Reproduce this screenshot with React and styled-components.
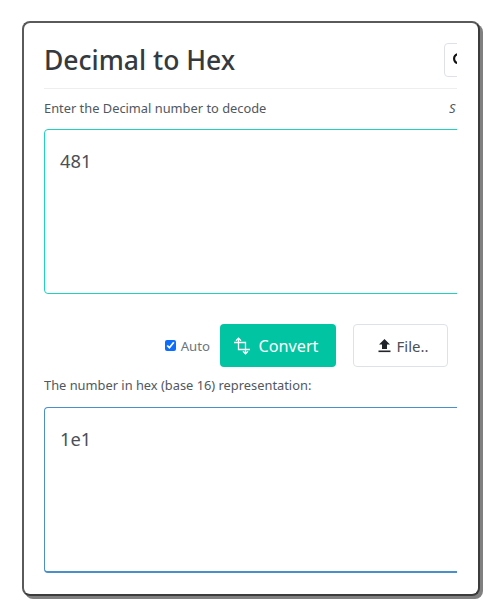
import React from "react";
import styled, { createGlobalStyle } from "styled-components";
import { FaSearch } from "react-icons/fa";

const Global = createGlobalStyle`
  html, body { margin: 0; padding: 0; background: #fff; }
  body { width: 500px; height: 616px; overflow: hidden; font-family: "Noto Sans", "Open Sans", sans-serif; color: #343a40; }
`;
const Page = styled.div`
  padding: 21px 0 0 22px;
`;
const Card = styled.section`
  box-sizing: border-box;
  width: 458px;
  height: 575px;
  border: 2px solid #5a5a5a;
  border-right-color: #3c3c3c;
  border-bottom-color: #3c3c3c;
  border-radius: 8px;
  background: #fff;
  box-shadow: 3px 3px 0 0 #808080;
  padding: 0 21px 0 20px;
`;
const Clip = styled.div`
  width: 413px;
  height: 100%;
  overflow: hidden;
`;
const Inner = styled.div`
  width: 640px;
`;
const Header = styled.header`
  display: flex;
  align-items: flex-start;
  justify-content: space-between;
  box-sizing: border-box;
  width: 413px;
  height: 66px;
  padding-top: 19px;
  border-bottom: 1px solid #eeeeee;
`;
const Title = styled.h1`
  margin: 0;
  font-size: 26.5px;
  line-height: 36px;
  font-weight: 500;
  color: #343a40;
`;
const SearchBox = styled.div`
  box-sizing: border-box;
  width: 40px;
  height: 34px;
  margin: 1px -27px 0 0;
  border: 1px solid #dee2e6;
  border-radius: 4px;
  display: flex;
  align-items: center;
  padding-left: 8px;
  color: #111;
`;
const LabelRow = styled.div`
  display: flex;
  justify-content: space-between;
  align-items: center;
  box-sizing: border-box;
  width: 413px;
  height: 40px;
  padding-bottom: 2px;
  font-size: 12.85px;
  color: #505860;
`;
const Side = styled.span`
  font-style: italic;
  width: 8px;
  overflow: hidden;
`;
const Area = styled.textarea`
  display: block;
  box-sizing: border-box;
  width: 640px;
  height: ${(p) => p.$height}px;
  border: 1px solid ${(p) => p.$accent};
  border-bottom-width: ${(p) => p.$bottom}px;
  border-radius: 4px;
  padding: 17px 15px;
  font-family: "Noto Sans", sans-serif;
  font-size: 18.3px;
  line-height: 27px;
  color: #495057;
  outline: none;
  resize: none;
`;
const Actions = styled.div`
  display: flex;
  align-items: center;
  justify-content: flex-end;
  width: 404px;
  height: 43px;
  margin-top: 30px;
`;
const Auto = styled.label`
  display: flex;
  align-items: center;
  gap: 5px;
  font-size: 13.2px;
  color: #6c757d;
  margin-right: 10px;
`;
const Check = styled.input`
  margin: 0 0 0 -1px;
  width: 11px;
  height: 11px;
  accent-color: #0d6efd;
`;
const Primary = styled.button`
  box-sizing: border-box;
  width: 116px;
  height: 43px;
  background: #00c4a2;
  color: #fff;
  border: none;
  border-radius: 4px;
  display: flex;
  align-items: center;
  justify-content: center;
  gap: 8px;
  padding: 0 5px 0 0;
  font-family: inherit;
  font-size: 16.2px;
  font-weight: 400;
  margin-right: 17px;
`;
const Secondary = styled.button`
  box-sizing: border-box;
  width: 95px;
  height: 43px;
  background: #fff;
  border: 1px solid #dee2e6;
  border-radius: 4px;
  display: flex;
  align-items: center;
  justify-content: center;
  gap: 5px;
  font-family: inherit;
  font-size: 15px;
  color: #495057;
  padding-left: 12px;
`;
const OutputLabel = styled.div`
  font-size: 12.85px;
  line-height: 16px;
  color: #505860;
  margin: 10px 0 14px;
`;

const Upload = () => (
  <svg width="13" height="15" viewBox="0 0 13 15" aria-hidden="true">
    <path d="M6.5 1 L12 6.5 H9 V11 H4 V6.5 H1 Z" fill="#212529" />
    <rect x="0.5" y="12.5" width="12" height="1.6" fill="#212529" />
  </svg>
);

const CropArrows = () => (
  <svg width="18" height="18" viewBox="0 0 18 18" fill="none" stroke="#fff" strokeWidth="1.3" aria-hidden="true">
    <path d="M5.5 1.5 V12.5 H17" />
    <path d="M1 5.5 H12.5 V16.5" />
    <path d="M3 3.8 L5.5 1.2 L8 3.8" />
    <path d="M10 14.2 L12.5 16.8 L15 14.2" />
  </svg>
);

export default function App() {
  return (
    <Page>
      <Global />
      <Card>
        <Clip>
          <Inner>
            <Header>
              <Title>Decimal to Hex</Title>
              <SearchBox><FaSearch size={14} /></SearchBox>
            </Header>
            <LabelRow>
              <span>Enter the Decimal number to decode</span>
              <Side>S</Side>
            </LabelRow>
            <Area $accent="#1fd1c1" $height={165} $bottom={1} defaultValue="481" />
            <Actions>
              <Auto><Check type="checkbox" defaultChecked readOnly />Auto</Auto>
              <Primary><CropArrows />Convert</Primary>
              <Secondary><Upload />File..</Secondary>
            </Actions>
            <OutputLabel>The number in hex (base 16) representation:</OutputLabel>
            <Area $accent="#4a8fc7" $height={166} $bottom={2} defaultValue="1e1" />
          </Inner>
        </Clip>
      </Card>
    </Page>
  );
}
